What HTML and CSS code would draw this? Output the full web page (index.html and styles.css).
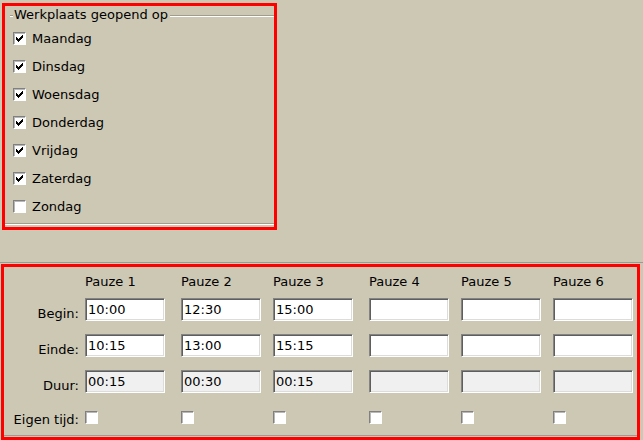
FILE: index.html
```html
<!DOCTYPE html>
<html lang="nl">
<head>
  <meta charset="UTF-8" />
  <meta name="viewport" content="width=device-width, initial-scale=1.0"/>
  <title>Werkplaats instellingen</title>
  <link rel="stylesheet" href="styles.css">
</head>
<body>
  <div class="days">
    <div class="group-title"><span>Werkplaats geopend op</span></div>
    <div class="day-list">
      <label class="day"><span class="check on"><svg viewBox="0 0 13 13"><path d="M3 5h1v3h-1zM4 6h1v3h-1zM5 7h1v3h-1zM6 6h1v3h-1zM7 5h1v3h-1zM8 4h1v3h-1zM9 3h1v3h-1z"/></svg></span>Maandag</label>
      <label class="day"><span class="check on"><svg viewBox="0 0 13 13"><path d="M3 5h1v3h-1zM4 6h1v3h-1zM5 7h1v3h-1zM6 6h1v3h-1zM7 5h1v3h-1zM8 4h1v3h-1zM9 3h1v3h-1z"/></svg></span>Dinsdag</label>
      <label class="day"><span class="check on"><svg viewBox="0 0 13 13"><path d="M3 5h1v3h-1zM4 6h1v3h-1zM5 7h1v3h-1zM6 6h1v3h-1zM7 5h1v3h-1zM8 4h1v3h-1zM9 3h1v3h-1z"/></svg></span>Woensdag</label>
      <label class="day"><span class="check on"><svg viewBox="0 0 13 13"><path d="M3 5h1v3h-1zM4 6h1v3h-1zM5 7h1v3h-1zM6 6h1v3h-1zM7 5h1v3h-1zM8 4h1v3h-1zM9 3h1v3h-1z"/></svg></span>Donderdag</label>
      <label class="day"><span class="check on"><svg viewBox="0 0 13 13"><path d="M3 5h1v3h-1zM4 6h1v3h-1zM5 7h1v3h-1zM6 6h1v3h-1zM7 5h1v3h-1zM8 4h1v3h-1zM9 3h1v3h-1z"/></svg></span>Vrijdag</label>
      <label class="day"><span class="check on"><svg viewBox="0 0 13 13"><path d="M3 5h1v3h-1zM4 6h1v3h-1zM5 7h1v3h-1zM6 6h1v3h-1zM7 5h1v3h-1zM8 4h1v3h-1zM9 3h1v3h-1z"/></svg></span>Zaterdag</label>
      <label class="day"><span class="check"></span>Zondag</label>
    </div>
    <div class="group-bottom"></div>
  </div>

  <div class="pauses-wrap">
    <div class="pauses">
      <div class="pause-grid">
        <div></div>
        <div class="head">Pauze 1</div>
        <div class="head">Pauze 2</div>
        <div class="head">Pauze 3</div>
        <div class="head">Pauze 4</div>
        <div class="head">Pauze 5</div>
        <div class="head">Pauze 6</div>

        <div class="row-label">Begin:</div>
        <input class="field" value="10:00">
        <input class="field" value="12:30">
        <input class="field" value="15:00">
        <input class="field" value="">
        <input class="field" value="">
        <input class="field" value="">

        <div class="row-label">Einde:</div>
        <input class="field" value="10:15">
        <input class="field" value="13:00">
        <input class="field" value="15:15">
        <input class="field" value="">
        <input class="field" value="">
        <input class="field" value="">

        <div class="row-label">Duur:</div>
        <input class="field" value="00:15" disabled>
        <input class="field" value="00:30" disabled>
        <input class="field" value="00:15" disabled>
        <input class="field" value="" disabled>
        <input class="field" value="" disabled>
        <input class="field" value="" disabled>

        <div class="row-label last">Eigen tijd:</div>
        <div class="cell-check"><span class="check"></span></div>
        <div class="cell-check"><span class="check"></span></div>
        <div class="cell-check"><span class="check"></span></div>
        <div class="cell-check"><span class="check"></span></div>
        <div class="cell-check"><span class="check"></span></div>
        <div class="cell-check"><span class="check"></span></div>
      </div>
    </div>
  </div>
</body>
</html>
```

FILE: styles.css
```css
body {
  margin: 0;
  font-family: "DejaVu Sans", Verdana, sans-serif;
  font-size: 13px;
  line-height: 15px;
  color: #000;
  background: #cdc8b4;
}

/* groupbox met de dagen */
.days {
  box-sizing: border-box;
  width: 275px;
  height: 227px;
  margin: 3px 0 0 2px;
  border: 3px solid #ff0000;
}
.group-title {
  display: flex;
  height: 15px;
  margin-top: 1px;
  padding-left: 5px;
}
.group-title::before,
.group-title::after {
  content: "";
  height: 0;
  margin-top: 8px;
  border-top: 1px solid #a09c8e;
  border-bottom: 1px solid #fff;
}
.group-title::before {
  width: 3px;
}
.group-title::after {
  flex: 1;
}
.group-title span {
  padding: 0 2px 0 1px;
}
.day-list {
  padding: 2px 0 0 8px;
}
.day {
  display: flex;
  align-items: center;
  gap: 6px;
  height: 28px;
}
.group-bottom {
  margin-top: 3px;
  border-top: 1px solid #a09c8e;
  border-bottom: 1px solid #fff;
}

/* checkbox in oude windows stijl */
.check {
  box-sizing: border-box;
  display: block;
  width: 13px;
  height: 13px;
  background: #fff;
  border: 1px solid;
  border-color: #808080 #fff #fff #808080;
  box-shadow: inset 1px 1px 0 #b8b8b8;
}
.check svg {
  display: block;
  width: 13px;
  height: 13px;
  margin: -1px;
  fill: #000;
  shape-rendering: crispEdges;
}

/* pauzes */
.pauses-wrap {
  margin-top: 32px;
  padding-top: 1px;
  border-top: 1px solid #9c9a94;
}
.pauses {
  box-sizing: border-box;
  width: 639px;
  height: 176px;
  margin-left: 1px;
  border: 3px solid #ff0000;
}
.pause-grid {
  display: grid;
  grid-template-columns: 81px 96px 92px 96px 92px 92px 83px;
  grid-template-rows: 18px 23px 23px 23px 23px;
  row-gap: 13px;
  height: 169px;
  box-sizing: border-box;
  border-bottom: 1px solid #9c9a94;
}
.head {
  padding-top: 7px;
}
.row-label {
  align-self: end;
  text-align: right;
  padding-right: 6px;
}
.row-label.last {
  align-self: center;
  padding-top: 3px;
}
.field {
  box-sizing: border-box;
  width: 80px;
  height: 23px;
  margin: 0;
  padding: 0 0 0 2px;
  font: inherit;
  color: #000;
  background: #fff;
  border: 1px solid;
  border-color: #848484 #fff #fff #848484;
  box-shadow: inset 1px 1px 0 #5e5e5e, inset -1px -1px 0 #dcdcdc;
  outline: none;
}
.field:disabled {
  background: #f0f0f0;
  color: #000;
  -webkit-text-fill-color: #000;
}
.cell-check {
  display: flex;
  align-items: center;
}
```
